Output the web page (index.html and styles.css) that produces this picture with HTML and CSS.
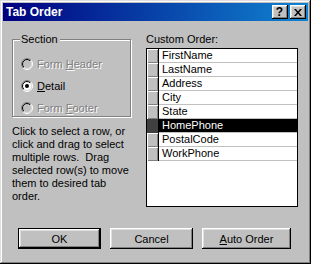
FILE: index.html
```html
<!DOCTYPE html>
<html>
<head>
<meta charset="utf-8">
<link rel="stylesheet" href="styles.css">
</head>
<body>
<div class="window">
  <div class="titlebar">
    <span class="title">Tab Order</span>
    <div class="tb-buttons">
      <div class="tb-btn help">?</div>
      <div class="tb-btn close">
        <svg width="8" height="7" viewBox="0 0 8 7"><path d="M0 0h2l2 2.5l2-2.5h2l-3 3.5l3 3.5h-2l-2-2.5l-2 2.5h-2l3-3.5z" fill="#000"/></svg>
      </div>
    </div>
  </div>
  <div class="body">
    <div class="main">
      <div class="left">
        <div class="group">
          <span class="group-label">Section</span>
          <div class="radios">
            <div class="radio disabled">
              <svg width="12" height="12" viewBox="0 0 12 12">
                <defs>
                  <linearGradient id="o1" x1="0" y1="0" x2="1" y2="1"><stop offset="0.5" stop-color="#808080"/><stop offset="0.5" stop-color="#fff"/></linearGradient>
                  <linearGradient id="i1" x1="0" y1="0" x2="1" y2="1"><stop offset="0.5" stop-color="#000"/><stop offset="0.5" stop-color="#dfdfdf"/></linearGradient>
                </defs>
                <circle cx="6" cy="6" r="5.5" fill="none" stroke="url(#o1)"/>
                <circle cx="6" cy="6" r="4.5" fill="#c0c0c0" stroke="url(#i1)"/>
              </svg>
              <span>Form <u>H</u>eader</span>
            </div>
            <div class="radio">
              <svg width="12" height="12" viewBox="0 0 12 12">
                <defs>
                  <linearGradient id="o2" x1="0" y1="0" x2="1" y2="1"><stop offset="0.5" stop-color="#808080"/><stop offset="0.5" stop-color="#fff"/></linearGradient>
                  <linearGradient id="i2" x1="0" y1="0" x2="1" y2="1"><stop offset="0.5" stop-color="#000"/><stop offset="0.5" stop-color="#dfdfdf"/></linearGradient>
                </defs>
                <circle cx="6" cy="6" r="5.5" fill="none" stroke="url(#o2)"/>
                <circle cx="6" cy="6" r="4.5" fill="#fff" stroke="url(#i2)"/>
                <circle cx="6" cy="6" r="2" fill="#000"/>
              </svg>
              <span><u>D</u>etail</span>
            </div>
            <div class="radio disabled">
              <svg width="12" height="12" viewBox="0 0 12 12">
                <defs>
                  <linearGradient id="o3" x1="0" y1="0" x2="1" y2="1"><stop offset="0.5" stop-color="#808080"/><stop offset="0.5" stop-color="#fff"/></linearGradient>
                  <linearGradient id="i3" x1="0" y1="0" x2="1" y2="1"><stop offset="0.5" stop-color="#000"/><stop offset="0.5" stop-color="#dfdfdf"/></linearGradient>
                </defs>
                <circle cx="6" cy="6" r="5.5" fill="none" stroke="url(#o3)"/>
                <circle cx="6" cy="6" r="4.5" fill="#c0c0c0" stroke="url(#i3)"/>
              </svg>
              <span>Form <u>F</u>ooter</span>
            </div>
          </div>
        </div>
        <p class="help-text">Click to select a row, or<br>click and drag to select<br>multiple rows.&nbsp; Drag<br>selected row(s) to move<br>them to desired tab<br>order.</p>
      </div>
      <div class="right">
        <div class="list-label">Custom Order:</div>
        <div class="list">
          <div class="row"><span class="sel"></span><span class="cell">FirstName</span></div>
          <div class="row"><span class="sel"></span><span class="cell">LastName</span></div>
          <div class="row"><span class="sel"></span><span class="cell">Address</span></div>
          <div class="row"><span class="sel"></span><span class="cell">City</span></div>
          <div class="row"><span class="sel"></span><span class="cell">State</span></div>
          <div class="row selected"><span class="sel"></span><span class="cell">HomePhone</span></div>
          <div class="row"><span class="sel"></span><span class="cell">PostalCode</span></div>
          <div class="row"><span class="sel"></span><span class="cell">WorkPhone</span></div>
        </div>
      </div>
    </div>
    <div class="buttons">
      <div class="btn default">OK</div>
      <div class="btn">Cancel</div>
      <div class="btn wide"><u>A</u>uto Order</div>
    </div>
  </div>
</div>
</body>
</html>
```

FILE: styles.css
```css
html, body {
  margin: 0;
  padding: 0;
  background: #c0c0c0;
}
body {
  font-family: "Liberation Sans", Arial, sans-serif;
  font-size: 11px;
  color: #000;
}
.window {
  width: 311px;
  height: 264px;
  box-sizing: border-box;
  padding: 3px;
  background: #c0c0c0;
  box-shadow: inset -1px -1px 0 #000, inset 1px 1px 0 #dfdfdf, inset -2px -2px 0 #808080, inset 2px 2px 0 #fff;
}
.titlebar {
  height: 18px;
  display: flex;
  align-items: center;
  justify-content: space-between;
  background: linear-gradient(to right, #000080, #1084d0);
  padding: 0 2px 0 3px;
}
.title {
  color: #fff;
  font-weight: bold;
  font-size: 12px;
  line-height: 18px;
}
.tb-buttons {
  display: flex;
  gap: 2px;
}
.tb-btn {
  width: 16px;
  height: 14px;
  box-sizing: border-box;
  background: #c0c0c0;
  box-shadow: inset -1px -1px 0 #000, inset 1px 1px 0 #fff, inset -2px -2px 0 #808080, inset 2px 2px 0 #dfdfdf;
  display: flex;
  align-items: center;
  justify-content: center;
}
.tb-btn.help {
  font-weight: bold;
  font-size: 12px;
  line-height: 14px;
  padding-right: 1px;
}
.tb-btn.close svg {
  display: block;
  margin-right: 1px;
}
.body {
  padding: 0 0 0 9px;
}
.main {
  display: flex;
  padding-top: 12px;
  height: 174px;
}
.left {
  width: 134px;
}
.group {
  margin-top: 6px;
  width: 119px;
  height: 78px;
  box-sizing: border-box;
  border: 1px solid #808080;
  box-shadow: 1px 1px 0 #fff, inset 1px 1px 0 #fff;
  padding-left: 8px;
}
.group-label {
  display: inline-block;
  margin-top: -7px;
  margin-left: -1px;
  padding: 0 2px 0 1px;
  background: #c0c0c0;
  line-height: 13px;
  vertical-align: top;
}
.radios {
  display: flex;
  flex-direction: column;
  padding-top: 1px;
}
.radio {
  display: flex;
  align-items: center;
  gap: 4px;
  height: 22px;
}
.radio svg {
  display: block;
  flex: none;
}
.radio.disabled span {
  color: #808080;
  text-shadow: 1px 1px 0 #fff;
}
.help-text {
  margin: 8px 0 0;
  line-height: 13px;
  white-space: nowrap;
}
.right {
  width: 152px;
}
.list-label {
  line-height: 13px;
}
.list {
  margin-top: 2px;
  height: 159px;
  box-sizing: border-box;
  border: 1px solid #000;
  background: #fff;
}
.row {
  display: flex;
  height: 14px;
}
.sel {
  width: 11px;
  flex: none;
  background: #c0c0c0;
  border-right: 1px solid #000;
  box-shadow: inset 1px 1px 0 #fff, inset -1px -1px 0 #808080;
}
.cell {
  flex: 1;
  border-bottom: 1px solid #c0c0c0;
  padding-left: 3px;
  line-height: 13px;
  white-space: nowrap;
}
.row.selected .sel {
  background: #404040;
  box-shadow: none;
}
.row.selected .cell {
  background: #000;
  color: #fff;
}
.buttons {
  display: flex;
  gap: 9px;
  margin-top: 21px;
  padding-left: 6px;
}
.btn {
  width: 83px;
  height: 21px;
  box-sizing: border-box;
  display: flex;
  align-items: center;
  justify-content: center;
  background: #c0c0c0;
  box-shadow: inset -1px -1px 0 #000, inset 1px 1px 0 #fff, inset -2px -2px 0 #808080, inset 2px 2px 0 #dfdfdf;
}
.btn.default {
  border: 1px solid #000;
}
.btn.wide {
  width: 89px;
}
```
